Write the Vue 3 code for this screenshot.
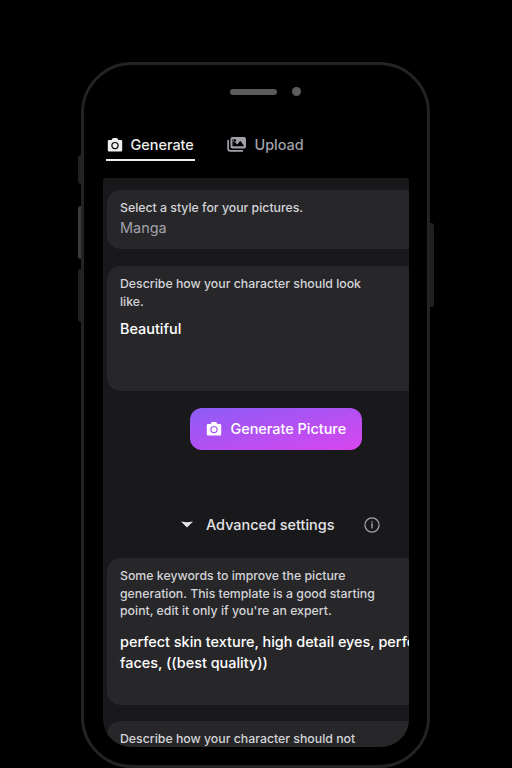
<script setup>
const tabs = [
  { id: 'generate', label: 'Generate', active: true },
  { id: 'upload', label: 'Upload', active: false },
]
</script>

<template>
  <main class="stage">
    <div class="phone">
      <i class="side silent"></i>
      <i class="side volume-up"></i>
      <i class="side volume-down"></i>
      <i class="side power"></i>

      <div class="sensors">
        <span class="speaker"></span>
        <span class="lens"></span>
      </div>

      <nav class="tabs">
        <a v-for="tab in tabs" :key="tab.id" class="tab" :class="[tab.id, { active: tab.active }]">
          <svg v-if="tab.id === 'generate'" class="camera" viewBox="0 0 16 14">
            <path fill="currentColor" fill-rule="evenodd" d="M2 2h2.600L5.300.700Q5.600 0 6.400 0h3.200q.8 0 1.100.7L11.400 2H14q1.200 0 1.200 1.200v9q0 1.200-1.200 1.200H2Q.8 13.400.8 12.200V3.200Q.8 2 2 2ZM8 3.900a3.700 3.700 0 1 0 0 7.400 3.700 3.700 0 0 0 0-7.400Zm0 1.200a2.500 2.500 0 1 1 0 5 2.500 2.500 0 0 1 0-5Z" />
          </svg>
          <svg v-else class="images" viewBox="0 0 20 16">
            <path fill="currentColor" fill-rule="evenodd" d="M5.500 0h11.500q2 0 2 2v7.500q0 2-2 2H5.500q-2 0-2-2V2q0-2 2-2ZM5.500 1.700v7.600h11.700L13.300 3.800 10.300 7.600 8.600 6.100ZM7.700 2.100a1.500 1.500 0 1 0 0 3 1.500 1.500 0 0 0 0-3Z" />
            <path d="M1.100 3.500v8.200q0 2.200 2.200 2.200h12" fill="none" stroke="currentColor" stroke-width="1.700" stroke-linecap="round" />
          </svg>
          <span>{{ tab.label }}</span>
        </a>
      </nav>

      <section class="screen">
        <div class="card style-card">
          <label>Select a style for your pictures.</label>
          <p class="value muted">Manga</p>
        </div>

        <div class="card look-card">
          <label>Describe how your character should look<br />like.</label>
          <p class="value">Beautiful</p>
        </div>

        <button class="generate-button">
          <svg class="camera" viewBox="0 0 16 14">
            <path fill="currentColor" fill-rule="evenodd" d="M2 2h2.600L5.300.700Q5.600 0 6.400 0h3.200q.8 0 1.100.7L11.400 2H14q1.200 0 1.200 1.200v9q0 1.200-1.200 1.200H2Q.8 13.400.8 12.200V3.200Q.8 2 2 2ZM8 3.900a3.700 3.700 0 1 0 0 7.400 3.700 3.700 0 0 0 0-7.400Zm0 1.200a2.500 2.500 0 1 1 0 5 2.500 2.500 0 0 1 0-5Z" />
          </svg>
          <span>Generate Picture</span>
        </button>

        <div class="advanced">
          <svg class="caret" viewBox="0 0 12 7"><path d="M0 .4 6 1.200 12 .4 6 6.600Z" fill="currentColor" /></svg>
          <span class="advanced-title">Advanced settings</span>
          <svg class="info" viewBox="0 0 16 16" fill="none" stroke="currentColor">
            <circle cx="8" cy="8" r="7.100" stroke-width="1.200" />
            <path d="M8 4.200v1.400M8 6.200v5.400" stroke-width="1.400" />
          </svg>
        </div>

        <div class="card keywords-card">
          <label>Some keywords to improve the picture<br />generation. This template is a good starting<br />point, edit it only if you're an expert.</label>
          <p class="value">perfect skin texture, high detail eyes, perfect<br />faces, ((best quality))</p>
        </div>

        <div class="card negative-card">
          <label>Describe how your character should not</label>
        </div>
      </section>
    </div>
  </main>
</template>

<style>
body { background: #000; }
</style>

<style scoped>
* { box-sizing: border-box; }
.stage {
  height: 768px;
  padding: 62px 0 0 81px;
  overflow: hidden;
  background: #000;
  color: #fff;
  font: 500 14.430px/21px Inter, sans-serif;
}
.phone {
  position: relative;
  width: 349px;
  height: 706px;
  padding: 0 18px 0 19px;
  border: 3px solid #232323;
  border-radius: 51px;
}
.side {
  position: absolute;
  left: -6px;
  width: 3px;
  border-radius: 3px 0 0 3px;
  background: #202020;
}
.silent { top: 90px; height: 29px; }
.volume-up { top: 141px; height: 53px; background: #3b3b3b; }
.volume-down { top: 204px; height: 53px; }
.power { top: 158px; left: 346px; height: 84px; width: 4px; border-radius: 0 3px 3px 0; }
.sensors {
  display: flex;
  align-items: center;
  gap: 15px;
  height: 53px;
  padding: 0 0 0 127px;
}
.speaker { width: 47px; height: 6px; border-radius: 3px; background: #5c5c5c; }
.lens { width: 9px; height: 9px; border-radius: 50%; background: #5c5c5c; }
.tabs {
  display: flex;
  gap: 30px;
  height: 60px;
  padding: 11px 0 0 3px;
}
.tab {
  display: flex;
  align-items: center;
  height: 32px;
  padding-top: 1px;
  border-bottom: 2px solid transparent;
  color: #a1a1aa;
}
.tab.active { width: 89px; padding-left: .5px; border-color: #eee; color: #eee; }
.camera { width: 16px; height: 14px; margin-right: 8px; flex: none; }
.images { width: 20px; height: 16px; margin: 0 7.500px 0 2px; flex: none; }
.screen {
  width: 306px;
  height: 569px;
  padding: 12px 0 0 4px;
  overflow: hidden;
  border-radius: 2px 2px 28px 28px;
  background: #19191b;
}
.card {
  width: 340px;
  padding: 9px 13px;
  border-radius: 14px;
  background: #27272a;
}
.card label {
  display: block;
  color: #d4d4d8;
  font-size: 12.300px;
  line-height: 17.600px;
}
.value { margin: 0; white-space: nowrap; }
.muted { color: #a1a1aa; font-weight: 400; }
.style-card { height: 59px; padding-top: 8.600px; }
.style-card .value { margin-top: .8px; }
.look-card { height: 125px; margin-top: 17px; }
.look-card .value { margin-top: 8px; }
.generate-button {
  display: flex;
  align-items: center;
  width: 172px;
  height: 42px;
  margin: 17px 0 0 83.400px;
  padding: 0 16px 1px;
  border: 0;
  border-radius: 12px;
  background: linear-gradient(to bottom right, #8b5cf6, #d946ef);
  color: #fff;
  font: inherit;
  white-space: nowrap;
}
.advanced {
  display: flex;
  align-items: center;
  height: 30px;
  margin: 59.500px 0 0 74px;
  color: #e4e4e7;
}
.caret { width: 12px; height: 7px; margin-right: 13px; }
.advanced-title { width: 158px; padding-bottom: 1px; white-space: nowrap; }
.info { width: 16px; height: 16px; color: #a1a1aa; }
.keywords-card { height: 147px; margin-top: 18.500px; }
.keywords-card .value { margin-top: 11px; }
.negative-card { height: 80px; margin-top: 16px; }
</style>
